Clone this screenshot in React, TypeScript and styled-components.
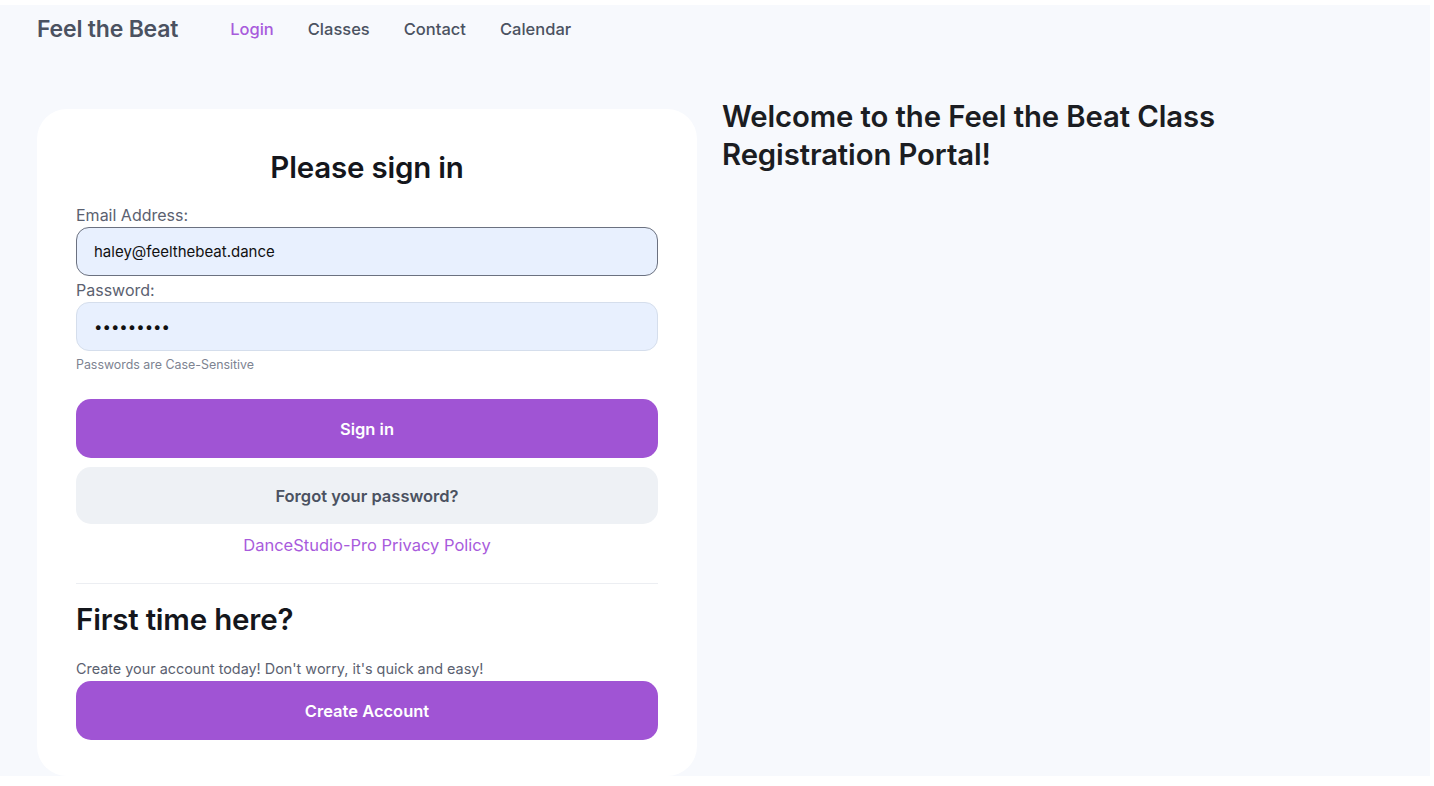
import React, { useState } from "react";
import styled, { createGlobalStyle } from "styled-components";

const GlobalStyle = createGlobalStyle`
  html, body {
    margin: 0;
    padding: 0;
    background: #ffffff;
  }
  body {
    font-family: Inter, "Noto Sans", "Liberation Sans", sans-serif;
    -webkit-font-smoothing: antialiased;
  }
  * {
    box-sizing: border-box;
  }
`;

const Page = styled.div`
  margin-top: 5px;
  width: 1430px;
  height: 771px;
  background: #f7f9fd;
  overflow: hidden;
`;

const Nav = styled.nav`
  display: flex;
  align-items: center;
  height: 48px;
  padding-left: 37px;
`;

const Brand = styled.a`
  font-size: 23px;
  font-weight: 600;
  color: #4b5261;
  text-decoration: none;
  margin-right: 52px;
  letter-spacing: -0.2px;
`;

const NavLinks = styled.div`
  display: flex;
  gap: 34px;
`;

const NavLink = styled.a<{ $active?: boolean }>`
  font-size: 16.5px;
  font-weight: 500;
  color: ${(p) => (p.$active ? "#a85bdc" : "#4b5261")};
  text-decoration: none;
  cursor: pointer;
`;

const Main = styled.main`
  display: grid;
  grid-template-columns: 660px 520px;
  column-gap: 25px;
  padding: 45px 0 0 37px;
  align-items: start;
`;

const Card = styled.section`
  background: #ffffff;
  border-radius: 30px;
  margin-top: 11px;
  padding: 38px 39px 38px;
  height: 667px;
`;

const Title = styled.h2<{ $center?: boolean }>`
  margin: 0;
  font-size: 29.5px;
  font-weight: 600;
  color: #14161c;
  text-align: ${(p) => (p.$center ? "center" : "left")};
  line-height: 40px;
  letter-spacing: -0.2px;
`;

const Form = styled.form`
  display: flex;
  flex-direction: column;
  margin-top: 18px;
`;

const Label = styled.label`
  font-size: 16px;
  color: #5b6170;
  line-height: 20px;
  margin-bottom: 2px;
`;

const Input = styled.input<{ $focused?: boolean }>`
  height: 49px;
  border-radius: 13px;
  border: 1px solid ${(p) => (p.$focused ? "#6b7180" : "#d5deec")};
  background: #e8f0fe;
  padding: 0 17px;
  font-family: inherit;
  font-size: 15px;
  color: #111111;
  outline: none;
  margin-bottom: 4px;
`;

const PasswordInput = styled(Input)`
  letter-spacing: 0;
  margin-bottom: 6px;
`;

const Hint = styled.span`
  font-size: 12.4px;
  color: #7d8391;
  line-height: 16px;
  margin-bottom: 26px;
`;

const Button = styled.button<{ $variant?: "primary" | "secondary" }>`
  height: ${(p) => (p.$variant === "secondary" ? "57px" : "59px")};
  border: 0;
  border-radius: 15px;
  background: ${(p) => (p.$variant === "secondary" ? "#eef1f5" : "#a054d4")};
  color: ${(p) => (p.$variant === "secondary" ? "#4b5261" : "#ffffff")};
  font-family: inherit;
  font-size: 16.5px;
  font-weight: 600;
  cursor: pointer;
  width: 100%;
`;

const ButtonStack = styled.div`
  display: flex;
  flex-direction: column;
  gap: 9px;
`;

const PolicyLink = styled.a`
  display: block;
  text-align: center;
  margin-top: 10px;
  font-size: 16.5px;
  color: #a85bdc;
  text-decoration: none;
  line-height: 22px;
`;

const Divider = styled.hr`
  border: 0;
  border-top: 1px solid #eceef2;
  margin: 27px 0 15px;
`;

const Note = styled.p`
  margin: 21px 0 3px;
  font-size: 14.4px;
  color: #5b6170;
  line-height: 18px;
`;

const Welcome = styled.h1`
  margin: 0;
  font-size: 29.3px;
  font-weight: 600;
  line-height: 38px;
  color: #1b1d22;
  letter-spacing: -0.1px;
`;

export default function App() {
  const [email, setEmail] = useState("haley@feelthebeat.dance");
  const [password, setPassword] = useState("password1");

  return (
    <>
      <GlobalStyle />
      <Page>
        <Nav>
          <Brand>Feel the Beat</Brand>
          <NavLinks>
            <NavLink $active>Login</NavLink>
            <NavLink>Classes</NavLink>
            <NavLink>Contact</NavLink>
            <NavLink>Calendar</NavLink>
          </NavLinks>
        </Nav>
        <Main>
          <Card>
            <Title $center>Please sign in</Title>
            <Form onSubmit={(e) => e.preventDefault()}>
              <Label htmlFor="email">Email Address:</Label>
              <Input
                id="email"
                $focused
                value={email}
                onChange={(e) => setEmail(e.target.value)}
              />
              <Label htmlFor="password">Password:</Label>
              <PasswordInput
                id="password"
                type="password"
                value={password}
                onChange={(e) => setPassword(e.target.value)}
              />
              <Hint>Passwords are Case-Sensitive</Hint>
              <ButtonStack>
                <Button type="submit">Sign in</Button>
                <Button type="button" $variant="secondary">
                  Forgot your password?
                </Button>
              </ButtonStack>
            </Form>
            <PolicyLink>DanceStudio-Pro Privacy Policy</PolicyLink>
            <Divider />
            <Title>First time here?</Title>
            <Note>Create your account today! Don't worry, it's quick and easy!</Note>
            <Button type="button">Create Account</Button>
          </Card>
          <Welcome>Welcome to the Feel the Beat Class Registration Portal!</Welcome>
        </Main>
      </Page>
    </>
  );
}
